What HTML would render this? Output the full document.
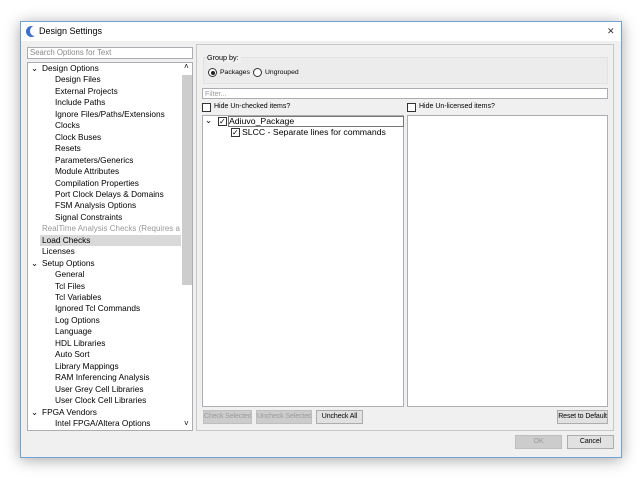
<!DOCTYPE html><html><head><style>
*{box-sizing:border-box;margin:0;padding:0}
body{width:642px;height:478px;background:#fff;position:relative;overflow:hidden;font-family:"Liberation Sans",sans-serif;font-size:8.3px;color:#000}
.a{position:absolute}
.win{left:20px;top:21px;width:602px;height:437px;background:#f0f0f0;border:1px solid #6fa3d6;box-shadow:0 2px 14px rgba(0,0,0,.35)}
.box{background:#fff;border:1px solid #abadb3}
.t{position:absolute;white-space:nowrap;line-height:11.45px}
.btn{position:absolute;height:14px;border:1px solid #adadad;background:#e1e1e1;text-align:center;line-height:12px;font-size:7px;white-space:nowrap;overflow:hidden;letter-spacing:-0.1px}
.dis{color:#9a9a9a;background:#ccc;border-color:#bfbfbf}
.cb{position:absolute;width:9px;height:9px;border:1px solid #333;background:#fff}
</style></head><body>
<div class="a win">
 <div class="a" style="left:0;top:0;width:600px;height:19px;background:#fff"></div>
 <div class="a" style="left:5px;top:4px;width:11px;height:11px;border-radius:50%;background:#3c6fc9"></div>
 <div class="a" style="left:9px;top:4px;width:9px;height:10px;border-radius:50%;background:#fff"></div>
 <div class="t" style="left:18px;top:4px;font-size:9px">Design Settings</div>
 <div class="t" style="left:586px;top:4px;font-size:9px;color:#333">✕</div>
</div>
<div class="a box" style="left:27px;top:47px;width:166px;height:12px"></div>
<div class="t" style="left:30px;top:47px;color:#888;font-size:7.8px">Search Options for Text</div>
<div class="a box" style="left:27px;top:62px;width:166px;height:369px"></div>
<div class="a" style="left:182px;top:75px;width:10px;height:210px;background:#cdcdcd"></div>
<div class="t" style="left:184px;top:61px;font-size:8px">˄</div>
<div class="t" style="left:184px;top:418px;font-size:8px">˅</div>
<div class="a" style="left:40px;top:235px;width:141px;height:11px;background:#d9d9d9"></div>
<div style="position:absolute;left:0;top:63px">
<div class="t" style="left:31px;top:0">⌄</div><div class="t" style="left:42px;top:0">Design Options</div>
<div class="t" style="left:55px;top:11.45px">Design Files</div>
<div class="t" style="left:55px;top:22.9px">External Projects</div>
<div class="t" style="left:55px;top:34.35px">Include Paths</div>
<div class="t" style="left:55px;top:45.8px">Ignore Files/Paths/Extensions</div>
<div class="t" style="left:55px;top:57.25px">Clocks</div>
<div class="t" style="left:55px;top:68.7px">Clock Buses</div>
<div class="t" style="left:55px;top:80.15px">Resets</div>
<div class="t" style="left:55px;top:91.6px">Parameters/Generics</div>
<div class="t" style="left:55px;top:103.05px">Module Attributes</div>
<div class="t" style="left:55px;top:114.5px">Compilation Properties</div>
<div class="t" style="left:55px;top:125.95px">Port Clock Delays &amp; Domains</div>
<div class="t" style="left:55px;top:137.4px">FSM Analysis Options</div>
<div class="t" style="left:55px;top:148.85px">Signal Constraints</div>
<div class="t" style="left:42px;top:160.3px;color:#999;width:138px;overflow:hidden;font-size:8px">RealTime Analysis Checks (Requires a ...</div>
<div class="t" style="left:42px;top:171.75px">Load Checks</div>
<div class="t" style="left:42px;top:183.2px">Licenses</div>
<div class="t" style="left:31px;top:194.65px">⌄</div><div class="t" style="left:42px;top:194.65px">Setup Options</div>
<div class="t" style="left:55px;top:206.1px">General</div>
<div class="t" style="left:55px;top:217.55px">Tcl Files</div>
<div class="t" style="left:55px;top:229px">Tcl Variables</div>
<div class="t" style="left:55px;top:240.45px">Ignored Tcl Commands</div>
<div class="t" style="left:55px;top:251.9px">Log Options</div>
<div class="t" style="left:55px;top:263.35px">Language</div>
<div class="t" style="left:55px;top:274.8px">HDL Libraries</div>
<div class="t" style="left:55px;top:286.25px">Auto Sort</div>
<div class="t" style="left:55px;top:297.7px">Library Mappings</div>
<div class="t" style="left:55px;top:309.15px">RAM Inferencing Analysis</div>
<div class="t" style="left:55px;top:320.6px">User Grey Cell Libraries</div>
<div class="t" style="left:55px;top:332.05px">User Clock Cell Libraries</div>
<div class="t" style="left:31px;top:343.5px">⌄</div><div class="t" style="left:42px;top:343.5px">FPGA Vendors</div>
<div class="t" style="left:55px;top:354.95px">Intel FPGA/Altera Options</div>
</div>
<div class="a" style="left:196px;top:44px;width:418px;height:387px;border:1px solid #c8c8c8"></div>
<div class="a" style="left:203px;top:57px;width:405px;height:27px;border:1px solid #e2e2e2;background:#ececec"></div>
<div class="t" style="left:207px;top:52px;font-size:7.2px;background:#f0f0f0;padding-right:2px">Group by:</div>
<div class="a" style="left:208px;top:68px;width:9px;height:9px;border:1px solid #333;border-radius:50%;background:#fff"></div>
<div class="a" style="left:210.5px;top:70.5px;width:4px;height:4px;border-radius:50%;background:#222"></div>
<div class="t" style="left:220px;top:67px;font-size:6.8px">Packages</div>
<div class="a" style="left:253px;top:68px;width:9px;height:9px;border:1px solid #333;border-radius:50%;background:#fff"></div>
<div class="t" style="left:265px;top:67px;font-size:6.8px">Ungrouped</div>
<div class="a box" style="left:202px;top:88px;width:406px;height:11px"></div>
<div class="t" style="left:205px;top:87.5px;color:#999;font-size:7.2px">Filter...</div>
<div class="cb" style="left:202px;top:103px"></div><div class="t" style="left:214px;top:101px;font-size:7px">Hide Un-checked items?</div>
<div class="cb" style="left:407px;top:103px"></div><div class="t" style="left:419px;top:101px;font-size:7px">Hide Un-licensed items?</div>
<div class="a box" style="left:202px;top:115px;width:202px;height:292px"></div>
<div class="a box" style="left:407px;top:115px;width:201px;height:292px"></div>
<div class="a" style="left:228px;top:116px;width:176px;height:11px;border:1px solid #777"></div>
<div class="t" style="left:205px;top:115px">⌄</div>
<div class="cb" style="left:218px;top:117px;font-size:8px;line-height:7px">✓</div><div class="t" style="left:229px;top:115.5px;font-size:8.7px">Adiuvo_Package</div>
<div class="cb" style="left:231px;top:128px;font-size:8px;line-height:7px">✓</div><div class="t" style="left:242px;top:126.5px;font-size:8.7px">SLCC - Separate lines for commands</div>
<div class="btn dis" style="left:203px;top:410px;width:49px">Check Selected</div>
<div class="btn dis" style="left:256px;top:410px;width:56px">Uncheck Selected</div>
<div class="btn" style="left:316px;top:410px;width:47px">Uncheck All</div>
<div class="btn" style="left:557px;top:410px;width:51px">Reset to Default</div>
<div class="btn dis" style="left:515px;top:435px;width:47px">OK</div>
<div class="btn" style="left:567px;top:435px;width:47px">Cancel</div>
</body></html>
